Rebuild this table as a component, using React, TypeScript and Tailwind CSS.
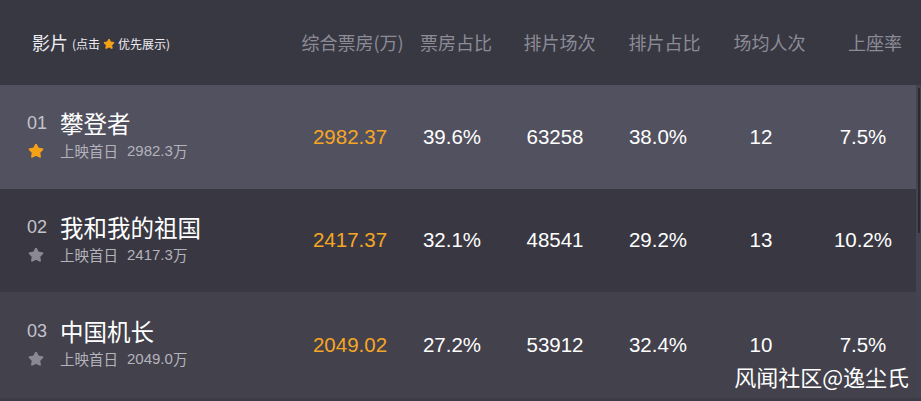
import { Star } from "lucide-react";

type Movie = {
  rank: string;
  name: string;
  firstDay: string;
  box: string;
  boxRate: string;
  shows: string;
  showRate: string;
  avg: string;
  seat: string;
};

const movies: Movie[] = [
  { rank: "01", name: "攀登者", firstDay: "2982.3", box: "2982.37", boxRate: "39.6%", shows: "63258", showRate: "38.0%", avg: "12", seat: "7.5%" },
  { rank: "02", name: "我和我的祖国", firstDay: "2417.3", box: "2417.37", boxRate: "32.1%", shows: "48541", showRate: "29.2%", avg: "13", seat: "10.2%" },
  { rank: "03", name: "中国机长", firstDay: "2049.0", box: "2049.02", boxRate: "27.2%", shows: "53912", showRate: "32.4%", avg: "10", seat: "7.5%" },
];

const rowBg = ["bg-[#52515f]", "bg-[#393842]", "bg-[#42414c]"];
const rowH = ["h-[104px]", "h-[103px]", "h-[106px]"];

const cjk = "font-['Microsoft_YaHei','Noto_Sans_CJK_SC',sans-serif]";
const num = "font-['Liberation_Sans','Noto_Sans_CJK_SC',sans-serif]";

export default function App() {
  return (
    <div className={`relative w-[921px] h-[401px] overflow-hidden bg-[#3c3b46] ${cjk}`}>
      {/* header */}
      <div className="flex h-[85px] items-center bg-[#383843] text-[18px] text-[#8c8b96]">
        <div className="w-[300px] pl-[32px] flex items-center">
          <span className="text-[#ececf0]">影片</span>
          <span className="ml-[4px] mt-[3px] flex items-center text-[12px] text-[#ececf0]">
            (点击
            <Star size={12} fill="#f5a216" stroke="#f5a216" className="mx-[3px]" />
            优先展示)
          </span>
        </div>
        <div className="w-[105px] text-center">综合票房(万)</div>
        <div className="w-[102px] text-center">票房占比</div>
        <div className="w-[105px] text-center">排片场次</div>
        <div className="w-[105px] text-center">排片占比</div>
        <div className="w-[105px] text-center">场均人次</div>
        <div className="w-[94px] text-center pl-[12px]">上座率</div>
      </div>

      <div className="flex">
        <div className="w-[916px]">
          {movies.map((m, i) => (
            <div key={m.rank} className={`flex items-center ${rowH[i]} ${rowBg[i]}`}>
              <div className="w-[300px] pl-[27px] -mt-[4px]">
                <div className="flex items-center h-[28px]">
                  <span className={`w-[33px] text-[18px] leading-[22px] text-[#c4c3cc] ${num}`}>{m.rank}</span>
                  <span className="text-[23.5px] leading-[28px] text-white">{m.name}</span>
                </div>
                <div className="flex items-center h-[20px] mt-[4px]">
                  <div className="w-[33px] pl-[1px]">
                    {i === 0 ? (
                      <Star size={16} fill="#f5a216" stroke="#f5a216" />
                    ) : (
                      <Star size={16} fill="#8a8993" stroke="#8a8993" />
                    )}
                  </div>
                  <span className="text-[14.5px] leading-[20px] text-[#b4b3bc]">上映首日</span>
                  <span className={`ml-[9px] text-[15px] leading-[20px] text-[#b4b3bc] ${num}`}>{m.firstDay}</span>
                  <span className="text-[14.5px] leading-[20px] text-[#b4b3bc]">万</span>
                </div>
              </div>
              <div className={`flex text-[20.5px] text-white ${num}`}>
                <div className="w-[100px] text-center text-[#f6a623]">{m.box}</div>
                <div className="w-[104px] text-center">{m.boxRate}</div>
                <div className="w-[102px] text-center">{m.shows}</div>
                <div className="w-[104px] text-center">{m.showRate}</div>
                <div className="w-[102px] text-center">{m.avg}</div>
                <div className="w-[102px] text-center">{m.seat}</div>
              </div>
            </div>
          ))}
        </div>
        <div className="w-[5px] pl-[2px] pt-[3px] bg-[#44434f]">
          <div className="w-[2px] h-[145px] bg-[#2a2a32]" />
        </div>
      </div>

      <div className="absolute right-[12px] bottom-[11px] text-[22px] leading-[28px] text-white">
        风闻社区@逸尘氏
      </div>
    </div>
  );
}
